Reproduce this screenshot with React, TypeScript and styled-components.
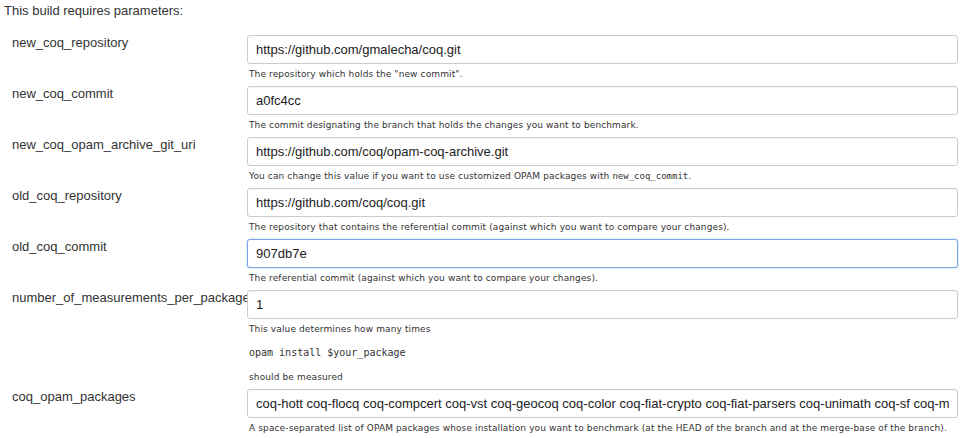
import styled, { createGlobalStyle } from "styled-components";

const GlobalStyle = createGlobalStyle`
  body {
    margin: 0;
    background: #fff;
    font-family: "Liberation Sans", Arial, sans-serif;
    color: #333;
  }
`;

const Page = styled.div`
  padding: 3px 0 0 4px;
`;

const Heading = styled.div`
  font-size: 13px;
  line-height: 15px;
  color: #333;
`;

const Form = styled.div`
  display: flex;
  flex-direction: column;
  margin-top: 17px;
`;

const Row = styled.div`
  display: grid;
  grid-template-columns: 243px 711px;
`;

const Label = styled.div`
  padding: 0 0 0 8px;
  font-size: 13px;
  line-height: 15px;
  color: #333;
  white-space: nowrap;
`;

const Main = styled.div`
  display: flex;
  flex-direction: column;
`;

const Input = styled.input<{ $focused?: boolean }>`
  box-sizing: border-box;
  width: 711px;
  height: 29px;
  padding: 0 8px;
  font-family: "Liberation Sans", Arial, sans-serif;
  font-size: 13px;
  color: #222;
  background: #fff;
  border: 1px solid ${(p) => (p.$focused ? "#7ba6e6" : "#ccc")};
  border-radius: 3px;
  box-shadow: ${(p) => (p.$focused ? "0 0 2px rgba(102,153,230,0.6)" : "inset 0 1px 1px rgba(0,0,0,0.04)")};
  outline: none;
`;

const Help = styled.div`
  padding: 4px 0 6px 2px;
  display: flex;
  flex-direction: column;
  gap: 12px;
`;

const Desc = styled.div`
  font-family: "DejaVu Sans", Verdana, sans-serif;
  font-size: 9px;
  line-height: 12px;
  letter-spacing: 0.12px;
  color: #333;
  white-space: nowrap;
`;

const Code = styled.span`
  font-family: "DejaVu Sans Mono", monospace;
  font-size: 9px;
  letter-spacing: 0;
`;

const Pre = styled.div`
  font-family: "DejaVu Sans Mono", monospace;
  font-size: 10px;
  line-height: 12px;
  color: #333;
  white-space: pre;
`;

type Param = {
  name: string;
  value: string;
  focused?: boolean;
  description: React.ReactNode;
};

const params: Param[] = [
  {
    name: "new_coq_repository",
    value: "https://github.com/gmalecha/coq.git",
    description: <Desc>The repository which holds the "new commit".</Desc>,
  },
  {
    name: "new_coq_commit",
    value: "a0fc4cc",
    description: <Desc>The commit designating the branch that holds the changes you want to benchmark.</Desc>,
  },
  {
    name: "new_coq_opam_archive_git_uri",
    value: "https://github.com/coq/opam-coq-archive.git",
    description: (
      <Desc>
        You can change this value if you want to use customized OPAM packages with <Code>new_coq_commit</Code>.
      </Desc>
    ),
  },
  {
    name: "old_coq_repository",
    value: "https://github.com/coq/coq.git",
    description: <Desc>The repository that contains the referential commit (against which you want to compare your changes).</Desc>,
  },
  {
    name: "old_coq_commit",
    value: "907db7e",
    focused: true,
    description: <Desc>The referential commit (against which you want to compare your changes).</Desc>,
  },
  {
    name: "number_of_measurements_per_package",
    value: "1",
    description: (
      <>
        <Desc>This value determines how many times</Desc>
        <Pre>opam install $your_package</Pre>
        <Desc>should be measured</Desc>
      </>
    ),
  },
  {
    name: "coq_opam_packages",
    value:
      "coq-hott coq-flocq coq-compcert coq-vst coq-geocoq coq-color coq-fiat-crypto coq-fiat-parsers coq-unimath coq-sf coq-math-classes coq-corn",
    description: (
      <Desc>
        A space-separated list of OPAM packages whose installation you want to benchmark (at the HEAD of the branch and at the merge-base of the branch).
      </Desc>
    ),
  },
];

export default function App() {
  return (
    <>
      <GlobalStyle />
      <Page>
        <Heading>This build requires parameters:</Heading>
        <Form>
          {params.map((p) => (
            <Row key={p.name}>
              <Label>{p.name}</Label>
              <Main>
                <Input defaultValue={p.value} $focused={p.focused} readOnly />
                <Help>{p.description}</Help>
              </Main>
            </Row>
          ))}
        </Form>
      </Page>
    </>
  );
}
